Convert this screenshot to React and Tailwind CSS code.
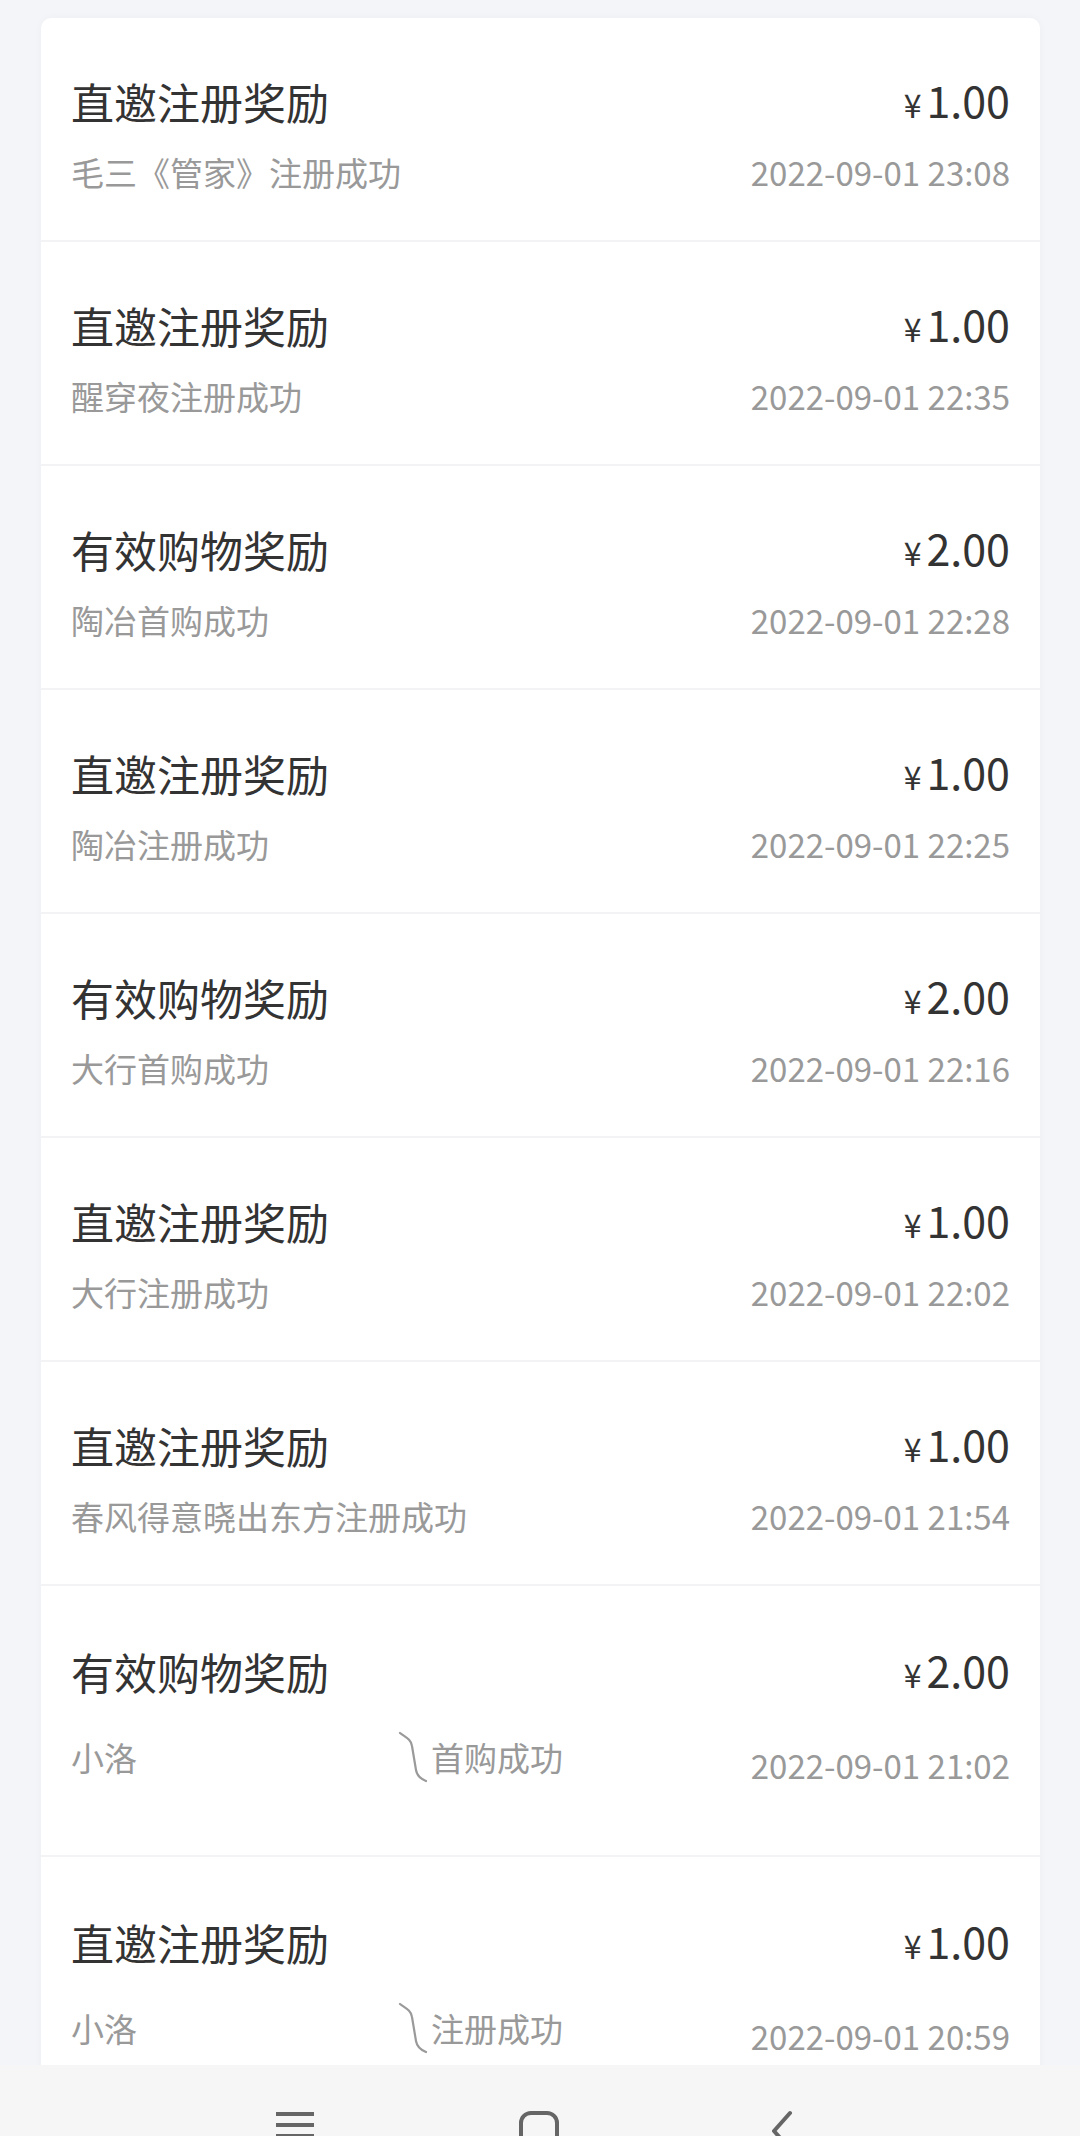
import React from "react";

const rows = [
  { t: "直邀注册奖励", a: "1.00", s: "毛三《管家》注册成功", d: "2022-09-01 23:08" },
  { t: "直邀注册奖励", a: "1.00", s: "醒穿夜注册成功", d: "2022-09-01 22:35" },
  { t: "有效购物奖励", a: "2.00", s: "陶冶首购成功", d: "2022-09-01 22:28" },
  { t: "直邀注册奖励", a: "1.00", s: "陶冶注册成功", d: "2022-09-01 22:25" },
  { t: "有效购物奖励", a: "2.00", s: "大行首购成功", d: "2022-09-01 22:16" },
  { t: "直邀注册奖励", a: "1.00", s: "大行注册成功", d: "2022-09-01 22:02" },
  { t: "直邀注册奖励", a: "1.00", s: "春风得意晓出东方注册成功", d: "2022-09-01 21:54" },
];

const special = [
  { t: "有效购物奖励", a: "2.00", s: "首购成功", d: "2022-09-01 21:02" },
  { t: "直邀注册奖励", a: "1.00", s: "注册成功", d: "2022-09-01 20:59" },
];

const font = { fontFamily: '"Noto Sans CJK SC", "Noto Sans", sans-serif' };

function TitleLine({ t, a }) {
  return (
    <div className="flex items-center justify-between h-[50px]">
      <span className="text-[43px] leading-[50px] text-[#333333]">{t}</span>
      <span className="flex items-baseline text-[#333333]">
        <span className="text-[32px] leading-[50px] mr-[5px]">¥</span>
        <span className="text-[43px] leading-[50px]">{a}</span>
      </span>
    </div>
  );
}

function Squiggle() {
  return (
    <svg width="30" height="54" viewBox="0 0 30 54" className="ml-[261px] shrink-0" fill="none">
      <path
        d="M2 3 C7 7 13 9 14 16 L18 40 C19 46 23 49 28 51"
        stroke="#9a9a9a"
        strokeWidth="2.2"
        strokeLinecap="round"
      />
    </svg>
  );
}

export default function App() {
  return (
    <div className="w-[1080px] h-[2136px] flex flex-col bg-[#f4f5f9] overflow-hidden" style={font}>
      <div className="flex-1 overflow-hidden pt-[18px] pl-[41px] pr-[40px]">
        <div className="bg-white rounded-t-[10px] shadow-[0_0_10px_rgba(0,0,0,0.03)]">
          {rows.map((r, i) => (
            <div key={i} className="px-[30px] pt-[58px] pb-[48px] border-b-2 border-[#f3f3f5]">
              <TitleLine t={r.t} a={r.a} />
              <div className="mt-[26px] flex items-center justify-between h-[40px] text-[33px] leading-[40px] text-[#999999]">
                <span>{r.s}</span>
                <span>{r.d}</span>
              </div>
            </div>
          ))}
          {special.map((r, i) => (
            <div key={i} className="px-[30px] pt-[60px] pb-[70px] border-b-2 border-[#f3f3f5]">
              <TitleLine t={r.t} a={r.a} />
              <div className="mt-[34px] flex items-start justify-between text-[33px] leading-[40px] text-[#999999]">
                <div className="flex items-center h-[54px]">
                  <span>小洛</span>
                  <Squiggle />
                  <span className="ml-[3px]">{r.s}</span>
                </div>
                <span className="mt-[15px]">{r.d}</span>
              </div>
            </div>
          ))}
        </div>
      </div>
      <div className="h-[71px] shrink-0 bg-[#f6f6f7] relative overflow-hidden">
        <svg width="1080" height="71" viewBox="0 0 1080 71" fill="none" className="block">
          <g stroke="#666666" strokeWidth="4" strokeLinecap="butt">
            <line x1="276" y1="49" x2="314" y2="49" />
            <line x1="276" y1="60" x2="314" y2="60" />
            <line x1="276" y1="71" x2="314" y2="71" />
            <rect x="521" y="48" width="36" height="44" rx="10" />
            <path d="M790 48 L774 66 L790 84" strokeLinecap="round" strokeLinejoin="round" />
          </g>
        </svg>
      </div>
    </div>
  );
}
